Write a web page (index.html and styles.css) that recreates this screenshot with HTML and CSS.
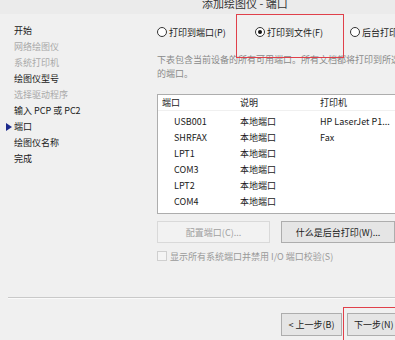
FILE: index.html
```html
<!DOCTYPE html>
<html lang="zh-CN">
<head>
    <meta charset="UTF-8">
    <title>添加绘图仪 - 端口</title>
    <link rel="stylesheet" href="styles.css">
</head>
<body>

    <div class="titlebar">添加绘图仪 - 端口</div>

    <div class="main">
        <ul class="steps">
            <li>开始</li>
            <li class="off">网络绘图仪</li>
            <li class="off">系统打印机</li>
            <li>绘图仪型号</li>
            <li class="off">选择驱动程序</li>
            <li>输入 PCP 或 PC2</li>
            <li class="current">端口</li>
            <li>绘图仪名称</li>
            <li>完成</li>
        </ul>

        <div class="content">
            <div class="radios">
                <label class="radio"><span class="dot"></span>打印到端口(P)</label>
                <label class="radio checked"><span class="dot"></span>打印到文件(F)</label>
                <label class="radio"><span class="dot"></span>后台打印(A)</label>
            </div>

            <p class="desc">下表包含当前设备的所有可用端口。所有文档都将打印到所选的端口。</p>

            <div class="ports">
                <div class="row head">
                    <span class="c1">端口</span>
                    <span class="c2">说明</span>
                    <span class="c3">打印机</span>
                </div>
                <div class="row"><span class="c1">USB001</span><span class="c2">本地端口</span><span class="c3">HP LaserJet P1...</span></div>
                <div class="row"><span class="c1">SHRFAX</span><span class="c2">本地端口</span><span class="c3">Fax</span></div>
                <div class="row"><span class="c1">LPT1</span><span class="c2">本地端口</span><span class="c3"></span></div>
                <div class="row"><span class="c1">COM3</span><span class="c2">本地端口</span><span class="c3"></span></div>
                <div class="row"><span class="c1">LPT2</span><span class="c2">本地端口</span><span class="c3"></span></div>
                <div class="row"><span class="c1">COM4</span><span class="c2">本地端口</span><span class="c3"></span></div>
            </div>

            <div class="actions">
                <button class="btn config" disabled>配置端口(C)...</button>
                <button class="btn what">什么是后台打印(W)...</button>
            </div>

            <label class="check"><span class="box"></span>显示所有系统端口并禁用 I/O 端口校验(S)</label>
        </div>
    </div>

    <div class="footer">
        <button class="btn back">&lt; 上一步(B)</button>
        <button class="btn next">下一步(N)</button>
    </div>

    <div class="mark mark-file"></div>
    <div class="mark mark-next"></div>

</body>
</html>
```

FILE: styles.css
```css
body {
    margin: 0;
    width: 395px;
    height: 340px;
    overflow: hidden;
    position: relative;
    background: #f0f0f0;
    color: #1a1a1a;
    font-family: "Noto Sans CJK SC", "Noto Sans", sans-serif;
    font-size: 9px;
}

.titlebar {
    height: 14px;
    line-height: 6px;
    padding-left: 202px;
    font-size: 11px;
    color: #333;
    background: #ebebeb;
    overflow: hidden;
}

.main {
    display: flex;
    padding-top: 9px;
}

.steps {
    list-style: none;
    margin: 0;
    padding: 0 0 0 14px;
    width: 143px;
    flex-shrink: 0;
}

.steps li {
    height: 16px;
    line-height: 16px;
    position: relative;
}

.steps li.off {
    color: #a9a9a9;
}

.steps li.current::before {
    content: "";
    position: absolute;
    left: -8px;
    top: 4px;
    border-left: 6px solid #1c2a8c;
    border-top: 4px solid transparent;
    border-bottom: 4px solid transparent;
}

.content {
    flex: 1;
    min-width: 0;
}

.radios {
    display: flex;
    height: 18px;
    align-items: center;
    white-space: nowrap;
}

.radio {
    display: flex;
    align-items: center;
    gap: 2px;
    flex-shrink: 0;
}

.radio:nth-child(1) { width: 98px; }
.radio:nth-child(2) { width: 95px; }

.dot {
    width: 8px;
    height: 8px;
    border: 1px solid #333;
    border-radius: 50%;
    background: #fff;
    position: relative;
}

.checked .dot::after {
    content: "";
    position: absolute;
    left: 2px;
    top: 2px;
    width: 4px;
    height: 4px;
    border-radius: 50%;
    background: #111;
}

.desc {
    margin: 12px 0 0;
    width: 246px;
    line-height: 14px;
    color: #8a8a8a;
}

.ports {
    margin-top: 13px;
    height: 120px;
    width: 260px;
    background: #fff;
    border: 1px solid #adadad;
    box-sizing: border-box;
}

.row {
    display: flex;
    height: 16px;
    line-height: 16px;
    white-space: nowrap;
}

.row.head {
    height: 15px;
    margin-bottom: 3px;
    border-bottom: 1px solid #f0f0f0;
}

.c1 { width: 66px; padding-left: 16px; }
.c2 { width: 80px; }
.c3 { flex: 1; }

.head .c1 { width: 78px; padding-left: 4px; }

.actions {
    display: flex;
    gap: 11px;
    margin-top: 7px;
}

.btn {
    font-family: inherit;
    font-size: 9px;
    height: 22px;
    padding: 0;
    background: #e5e5e5;
    border: 1px solid #adadad;
    color: #1a1a1a;
    white-space: nowrap;
}

.btn.config {
    width: 119px;
    color: #a0a0a0;
    border-color: #d9d9d9;
    background: #f2f2f2;
}

.btn.what {
    width: 120px;
}

.check {
    display: flex;
    align-items: center;
    gap: 3px;
    margin-top: 6px;
    height: 14px;
    color: #9a9a9a;
}

.box {
    width: 8px;
    height: 8px;
    border: 1px solid #cfcfcf;
    background: #f4f4f4;
}

.footer {
    position: absolute;
    left: 8px;
    right: 0;
    top: 297px;
    border-top: 1px solid #c9c9c9;
    box-shadow: inset 0 1px 0 #fafafa;
    display: flex;
    justify-content: flex-end;
    gap: 5px;
    padding-top: 15px;
    margin-right: -10px;
}

.btn.back {
    width: 61px;
    height: 23px;
}

.btn.next {
    width: 58px;
    height: 23px;
    text-align: left;
    padding-left: 6px;
}

.mark {
    position: absolute;
    border: 1px solid #e0404a;
}

.mark-file {
    left: 236px;
    top: 14px;
    width: 106px;
    height: 42px;
}

.mark-next {
    left: 343px;
    top: 307px;
    width: 60px;
    height: 40px;
}
```
